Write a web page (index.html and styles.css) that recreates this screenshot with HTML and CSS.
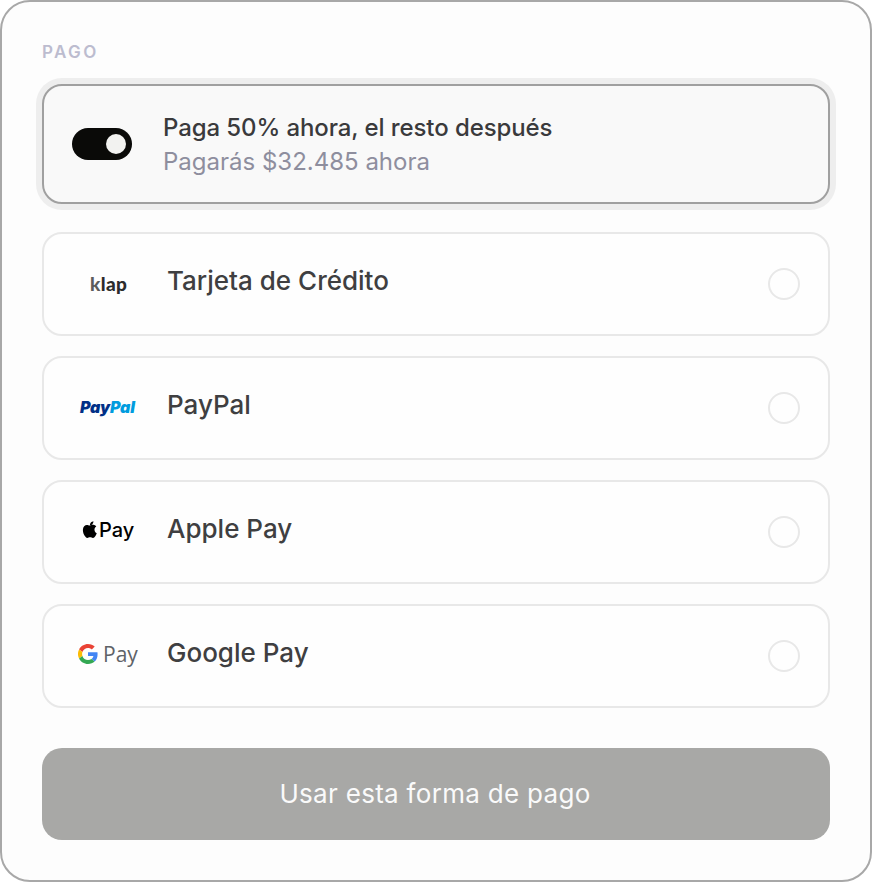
FILE: index.html
```html
<!DOCTYPE html>
<html lang="es">
<head>
<meta charset="utf-8">
<title>Pago</title>
<link rel="stylesheet" href="styles.css">
</head>
<body>
<main class="card">
  <h2 class="section-label">PAGO</h2>
  <section class="deposit">
    <span class="toggle"><span class="knob"></span></span>
    <div class="deposit-text">
      <div class="deposit-title">Paga 50% ahora, el resto después</div>
      <div class="deposit-sub">Pagarás $32.485 ahora</div>
    </div>
  </section>
  <div class="methods">
    <div class="method">
      <span class="logo"><span class="klap"><span class="klap-k">k</span>lap</span></span>
      <span class="method-name">Tarjeta de Crédito</span>
      <span class="radio"></span>
    </div>
    <div class="method">
      <span class="logo"><span class="paypal"><span class="pay-a">Pay</span><span class="pay-b">Pal</span></span></span>
      <span class="method-name">PayPal</span>
      <span class="radio"></span>
    </div>
    <div class="method">
      <span class="logo apple">
        <svg class="apple-icon" viewBox="0 0 17 20" aria-hidden="true"><path fill="#000" d="M8.700 4.900c-1 0-2-.7-3.200-.7C3.400 4.200 1 6 1 9.900c0 2.400.9 4.900 2 6.600 1 1.400 1.800 2.500 3 2.500 1.200 0 1.700-.8 3.200-.8 1.500 0 1.900.8 3.200.8 1.300 0 2.200-1.300 3-2.500.9-1.400 1.300-2.700 1.300-2.800-.1 0-2.600-1-2.600-3.900 0-2.500 2-3.600 2.100-3.700-1.300-1.900-3.300-2-3.900-2-1.500 0-2.700.8-3.600.8zM11.900 3.100c.7-.8 1.100-1.900 1.100-3.100-1 .1-2.200.7-2.900 1.500-.6.700-1.200 1.800-1 2.900 1.100.1 2.200-.5 2.800-1.300z"/></svg>
        <span class="apple-pay">Pay</span>
      </span>
      <span class="method-name">Apple Pay</span>
      <span class="radio"></span>
    </div>
    <div class="method">
      <span class="logo google">
        <svg class="g-icon" viewBox="0 0 48 48" aria-hidden="true">
          <path fill="#EA4335" d="M24 9.500c3.500 0 6.700 1.200 9.200 3.600l6.900-6.900C35.900 2.400 30.500 0 24 0 14.600 0 6.500 5.400 2.600 13.200l8 6.200C12.400 13.700 17.700 9.500 24 9.500z"/>
          <path fill="#4285F4" d="M47 24.500c0-1.600-.1-3.100-.4-4.500H24v9h12.900c-.6 3-2.200 5.500-4.700 7.200l7.700 6C44.400 38 47 31.900 47 24.500z"/>
          <path fill="#FBBC05" d="M10.600 28.600a14.500 14.500 0 0 1 0-9.200l-8-6.200a24 24 0 0 0 0 21.600l8-6.200z"/>
          <path fill="#34A853" d="M24 48c6.500 0 11.900-2.100 15.900-5.800l-7.700-6c-2.200 1.500-5 2.300-8.200 2.300-6.300 0-11.600-4.200-13.400-9.900l-8 6.200C6.500 42.600 14.600 48 24 48z"/>
        </svg>
        <span class="google-pay">Pay</span>
      </span>
      <span class="method-name">Google Pay</span>
      <span class="radio"></span>
    </div>
  </div>
  <button class="submit" type="button">Usar esta forma de pago</button>
</main>
</body>
</html>
```

FILE: styles.css
```css
* {
  box-sizing: border-box;
}

html,
body {
  margin: 0;
  padding: 0;
  background: #fff;
}

body {
  font-family: Inter, "Liberation Sans", sans-serif;
  color: #3a3a3c;
}

.card {
  width: 872px;
  height: 882px;
  border: 2px solid #a8a8a8;
  border-radius: 30px;
  background: #fdfdfd;
  padding: 40px 40px 0;
}

.section-label {
  margin: 0 0 22px;
  height: 20px;
  font-size: 17px;
  line-height: 20px;
  font-weight: 600;
  letter-spacing: 2.4px;
  color: #bcbccf;
}

.deposit {
  height: 120px;
  display: flex;
  align-items: center;
  padding-left: 28px;
  border: 2px solid #a0a0a0;
  border-radius: 20px;
  background: #f9f9f9;
  box-shadow: 0 0 0 6px #eeeeee;
  margin-bottom: 28px;
}

.toggle {
  width: 60px;
  height: 32px;
  border-radius: 16px;
  background: #0a0a08;
  display: flex;
  align-items: center;
  justify-content: flex-end;
  padding-right: 6px;
  flex: none;
}

.knob {
  width: 20px;
  height: 20px;
  border-radius: 50%;
  background: #f2f2f0;
}

.deposit-text {
  margin-left: 31px;
  margin-top: 1px;
}

.deposit-title {
  font-size: 24px;
  line-height: 34px;
  font-weight: 450;
  letter-spacing: -.1px;
  color: #3a3a3c;
}

.deposit-sub {
  font-size: 24px;
  line-height: 34px;
  font-weight: 400;
  color: #8e8e9e;
}

.methods {
  display: flex;
  flex-direction: column;
  gap: 20px;
}

.method {
  height: 104px;
  display: flex;
  align-items: center;
  border: 2px solid #e8e8e8;
  border-radius: 20px;
  background: #fefefe;
  padding-right: 28px;
}

.logo {
  width: 123px;
  padding-left: 34px;
  display: flex;
  align-items: center;
  flex: none;
}

.klap {
  margin-left: 12px;
  font-family: Lato, sans-serif;
  font-size: 19px;
  font-weight: 900;
  letter-spacing: .4px;
  color: #2c2c2c;
  line-height: 1;
  position: relative;
  top: -1px;
}

.klap-k {
  color: #5c5c5c;
}

.paypal {
  margin-left: 2px;
  font-family: Inter, sans-serif;
  font-style: italic;
  font-weight: 900;
  font-size: 16px;
  letter-spacing: -.2px;
  line-height: 1;
  position: relative;
  top: -1px;
}

.pay-a {
  color: #003087;
}

.pay-b {
  color: #009cde;
}

.apple {
  gap: 2px;
  padding-left: 38px;
  width: 123px;
}

.apple-icon {
  width: 15px;
  height: 18px;
  flex: none;
  position: relative;
  top: -2px;
}

.apple-pay {
  font-family: Inter, sans-serif;
  font-size: 20px;
  font-weight: 500;
  line-height: 1;
  color: #000;
  position: relative;
  top: -2px;
}

.google {
  gap: 5px;
}

.g-icon {
  width: 20px;
  height: 20px;
  flex: none;
  position: relative;
  top: -2px;
}

.google-pay {
  font-family: "Open Sans", sans-serif;
  font-size: 21px;
  font-weight: 400;
  line-height: 1;
  color: #5f6368;
  position: relative;
  top: -2px;
}

.method-name {
  flex: 1;
  font-size: 26px;
  line-height: 32px;
  font-weight: 450;
  color: #3f3f41;
  position: relative;
  top: -3px;
}

.radio {
  width: 32px;
  height: 32px;
  border: 2px solid #e8e8e8;
  border-radius: 50%;
  flex: none;
}

.submit {
  display: block;
  width: 100%;
  height: 92px;
  margin-top: 40px;
  padding: 0 2px 2px 0;
  border: 0;
  border-radius: 20px;
  background: #a8a8a6;
  color: #fafafa;
  font-family: Inter, sans-serif;
  font-size: 26px;
  font-weight: 400;
  letter-spacing: .3px;
}
```
